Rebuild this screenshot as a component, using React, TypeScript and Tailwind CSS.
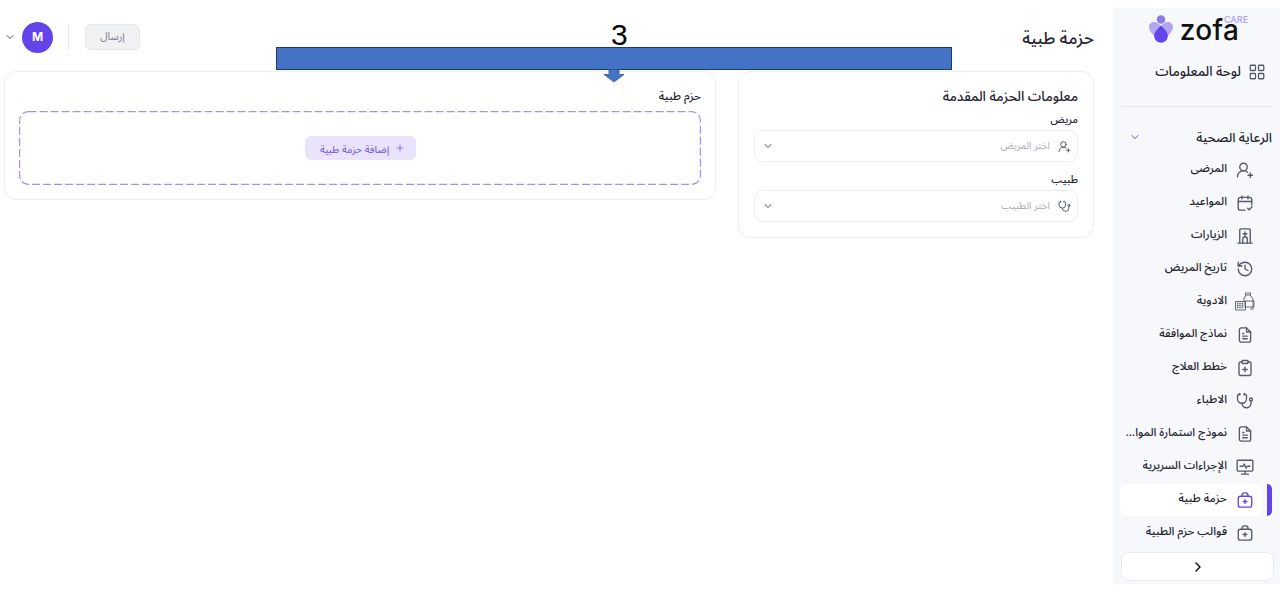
import {
  ChevronDown,
  ChevronRight,
  ClipboardPlus,
  History,
  LayoutGrid,
  Plus,
  Stethoscope,
  UserRoundPlus,
} from "lucide-react";

type IconProps = { className?: string; strokeWidth?: number };

function CalendarTick({ className, strokeWidth = 1.7 }: IconProps) {
  return (
    <svg viewBox="0 0 24 24" fill="none" stroke="currentColor" strokeWidth={strokeWidth} strokeLinecap="round" strokeLinejoin="round" className={className}>
      <path d="M8 2.500v4M16 2.500v4M3 10h18" />
      <path d="M12 21.500H6a3 3 0 0 1-3-3V7.500a3 3 0 0 1 3-3h12a3 3 0 0 1 3 3v7" />
      <path d="m15.500 19 2 2 4-4" />
    </svg>
  );
}

function HospitalDoor({ className, strokeWidth = 1.7 }: IconProps) {
  return (
    <svg viewBox="0 0 24 24" fill="none" stroke="currentColor" strokeWidth={strokeWidth} strokeLinecap="round" strokeLinejoin="round" className={className}>
      <path d="M2.500 21.500h19M5 21.500V4a1.500 1.500 0 0 1 1.500-1.500h11A1.500 1.500 0 0 1 19 4v17.500" />
      <path d="M9 21.500V16a3 3 0 0 1 6 0v5.500M12 6.500v5M9.500 9h5" />
    </svg>
  );
}

function MedsIcon({ className }: IconProps) {
  return (
    <svg viewBox="0 0 20 20" fill="none" stroke="currentColor" strokeWidth="0.900" className={className}>
      <path d="M10.500 1h5v2h-5zM11 3 9 6.500V9M15 3l3 4v10h-3" />
      <path d="M10 9h9v6h-9z" />
      <path d="M.5 9.500h10V18H.5z" />
      <path d="M2 11.500h7M2 13.500h7M2 15.500h7" strokeWidth="1.300" strokeDasharray="1 .700" />
    </svg>
  );
}

function DocLines({ className, strokeWidth = 1.7 }: IconProps) {
  return (
    <svg viewBox="0 0 24 24" fill="none" stroke="currentColor" strokeWidth={strokeWidth} strokeLinecap="round" strokeLinejoin="round" className={className}>
      <path d="M14 2.500H7a2.500 2.500 0 0 0-2.500 2.500v14A2.500 2.500 0 0 0 7 21.500h10a2.500 2.500 0 0 0 2.500-2.500V8z" />
      <path d="M14 2.500V8h5.500M9 10h1.500M9 13.500h6M9 17h6" />
    </svg>
  );
}

function MonitorPulse({ className, strokeWidth = 1.7 }: IconProps) {
  return (
    <svg viewBox="0 0 24 24" fill="none" stroke="currentColor" strokeWidth={strokeWidth} strokeLinecap="round" strokeLinejoin="round" className={className}>
      <rect x="1.500" y="3" width="21" height="14.500" rx="1.500" />
      <path d="M12 17.500v4M7.500 21.500h9M5.500 11h4l1.500-3 2.500 5.500 1.500-2.500h3.500" />
    </svg>
  );
}

function MedicalCase({ className, strokeWidth = 1.8 }: IconProps) {
  return (
    <svg viewBox="0 0 24 24" fill="none" stroke="currentColor" strokeWidth={strokeWidth} strokeLinecap="round" strokeLinejoin="round" className={className}>
      <rect x="3" y="7" width="18" height="14.500" rx="3" />
      <path d="M8 7V5.500a3 3 0 0 1 3-3h2a3 3 0 0 1 3 3V7M12 11.500v5M9.500 14h5" />
    </svg>
  );
}

const navItems: { label: string; icon: (p: IconProps) => React.ReactNode; large?: boolean; active?: boolean }[] = [
  { label: "المرضى", icon: UserRoundPlus },
  { label: "المواعيد", icon: CalendarTick },
  { label: "الزيارات", icon: HospitalDoor },
  { label: "تاريخ المريض", icon: History },
  { label: "الادوية", icon: MedsIcon, large: true },
  { label: "نماذج الموافقة", icon: DocLines },
  { label: "خطط العلاج", icon: ClipboardPlus },
  { label: "الاطباء", icon: Stethoscope },
  { label: "نموذج استمارة المواد الطبية", icon: DocLines },
  { label: "الإجراءات السريرية", icon: MonitorPulse },
  { label: "حزمة طبية", icon: MedicalCase, active: true },
  { label: "قوالب حزم الطبية", icon: MedicalCase },
];

function Sidebar() {
  return (
    <aside className="mt-2 flex h-[576px] w-[167px] shrink-0 flex-col bg-[#f7f8fc]">
      <div className="flex h-[40px] items-center justify-center pt-[1px] pr-[6px]" dir="ltr">
        <svg viewBox="0 0 26 28" className="h-[28px] w-[26px]">
          <path d="M1 12c0-5.500 7-7.500 12-1 5-6.500 12-4.500 12 1 0 3.500-2.500 6.500-6 9.500H7C3.500 18.500 1 15.500 1 12z" fill="#b3a5f3" />
          <circle cx="13" cy="4.500" r="4.200" fill="#8b7be8" />
          <path d="M13 10.500c3.200 3.500 6.800 6.500 6.800 10.500a6.800 6.800 0 0 1-13.600 0c0-4 3.600-7 6.800-10.500z" fill="#6344e8" />
        </svg>
        <div className="relative mt-[2px] ml-[6px] font-['Inter',sans-serif] text-[28px] leading-[12px] font-medium tracking-[0.3px] text-[#111]">
          zofa
          <span className="absolute -top-[8px] -right-[9px] text-[9px] leading-[7px] font-semibold tracking-normal text-[#b6a8f5]">CARE</span>
        </div>
      </div>
      <div className="mt-[8px] flex h-[32px] items-center gap-[7px] pr-[14px]">
        <LayoutGrid className="h-[18px] w-[18px] text-[#535b69]" strokeWidth={1.7} />
        <span className="text-[13.400px] leading-[22px] font-medium text-[#1f2430]">لوحة المعلومات</span>
      </div>
      <div className="mx-[8px] mt-[18px] h-px bg-[#e5e7eb]" />
      <div className="mt-[14px] flex h-[32px] items-center justify-between pr-[8px] pl-[16px]">
        <span className="pt-[2px] text-[13px] leading-[22px] font-medium text-[#1f2430]">الرعاية الصحية</span>
        <ChevronDown className="h-3 w-3 text-[#6344e8]" />
      </div>
      <nav className="flex flex-col">
        {navItems.map((item) => (
          <div key={item.label} className="flex h-[33px] items-center gap-[5px] pr-[8px]">
            <div className={`h-[32px] w-[5px] shrink-0 rounded-r-md ${item.active ? "bg-[#6344e8]" : ""}`} />
            <div className={`flex h-[32px] w-[142px] items-center gap-[9px] rounded-lg pr-[8px] pl-[5px] ${item.active ? "bg-white" : ""}`}>
              <item.icon
                className={`shrink-0 ${item.large ? "-mx-[1px] h-[20px] w-[20px]" : "h-[18px] w-[18px]"} ${item.active ? "text-[#6344e8]" : "text-[#535b69]"}`}
                strokeWidth={1.8}
              />
              <span className="-mt-[3px] truncate text-[11.500px] leading-[24px] font-medium text-[#1f2430]">{item.label}</span>
            </div>
          </div>
        ))}
      </nav>
      <button className="mt-[3px] mr-[6px] flex h-[29px] w-[153px] items-center justify-center rounded-lg border border-[#e9eaef] bg-white text-[#111]">
        <ChevronRight className="h-4 w-4" strokeWidth={2.2} />
      </button>
    </aside>
  );
}

function SelectField({ label, placeholder, icon: Icon, className }: { label: string; placeholder: string; icon: (p: IconProps) => React.ReactNode; className?: string }) {
  return (
    <div className={className}>
      <div className="pt-[1px] text-[10.500px] leading-[15px] font-medium text-[#1f2430]">{label}</div>
      <div className="mt-[2px] flex h-[32px] items-center justify-between rounded-lg border border-[#eceef2] pr-[6px] pl-[7px]">
        <div className="flex items-center gap-[8px]">
          <Icon className="h-[13px] w-[13px] text-[#535b69]" strokeWidth={1.8} />
          <span className="-mt-[1px] text-[10px] leading-[16px] text-[#a9adb6]">{placeholder}</span>
        </div>
        <ChevronDown className="h-3 w-3 text-[#4b5563]" />
      </div>
    </div>
  );
}

export default function App() {
  return (
    <div dir="rtl" className="relative flex h-[595px] w-[1280px] overflow-hidden bg-white font-['Noto_Sans_Arabic','Inter',sans-serif] text-[#1f2430]">
      <Sidebar />
      <main className="min-w-0 flex-1 pr-[19px] pl-[4px]">
        <header className="flex h-[71px] items-center justify-between pt-[3px]">
          <h1 className="pt-[3px] text-[17px] leading-[26px] font-medium text-[#1f2430]">حزمة طبية</h1>
          <div className="flex items-center">
            <button className="h-[26px] w-[55px] rounded-md border border-[#e5e7eb] bg-[#f0f1f3] pt-[2px] text-[10.500px] text-[#7a7f89]">إرسال</button>
            <div className="mr-[16px] ml-[15px] h-[25px] w-px bg-[#e5e7eb]" />
            <div className="flex h-[31px] w-[31px] items-center justify-center rounded-full bg-[#6344e8] font-['Inter',sans-serif] text-[12px] font-bold text-white">M</div>
            <ChevronDown className="mr-[6px] h-3 w-3 text-[#4b5563]" />
          </div>
        </header>
        <div className="flex items-start gap-[22px]">
          <section className="h-[167px] w-[356px] shrink-0 rounded-xl border border-[#eceef2] px-[15px] pt-[15px]">
            <h2 className="text-[13.500px] leading-[20px] font-medium text-[#1f2430]">معلومات الحزمة المقدمة</h2>
            <SelectField className="mt-[5px]" label="مريض" placeholder="اختر المريض" icon={UserRoundPlus} />
            <SelectField className="mt-[10px]" label="طبيب" placeholder="اختر الطبيب" icon={Stethoscope} />
          </section>
          <section className="h-[129px] flex-1 rounded-xl border border-[#eceef2] px-[14px] pt-[15px]">
            <h2 className="text-[11.500px] leading-[18px] font-medium text-[#1f2430]">حزم طبية</h2>
            <div className="relative mt-[6px] flex h-[74px] items-center justify-center">
              <svg className="absolute inset-0 h-full w-full" fill="none">
                <rect x="0.600" y="0.600" width="680.800" height="72.800" rx="9" stroke="#a48ff5" strokeWidth="1.200" strokeDasharray="8 3" />
              </svg>
              <button className="flex h-[24px] w-[111px] items-center justify-center gap-[6px] rounded-md bg-[#e9e4fb] pl-[5px] text-[10px] font-medium text-[#7d63e8]">
                <Plus className="h-2.5 w-2.5" />
                <span className="pt-[2px]">إضافة حزمة طبية</span>
              </button>
            </div>
          </section>
        </div>
      </main>
      {/* annotation drawn on top of the screenshot */}
      <div className="absolute top-[47px] left-[276px] h-[23px] w-[676px] border border-[#1f3864] bg-[#4472c4]" />
      <svg className="absolute top-[69px] left-[603px]" width="22" height="14" viewBox="0 0 22 14">
        <path d="M6 0.500h10v5h5L11 13 1 5.500h5z" fill="#4472c4" stroke="#2f528f" strokeWidth="0.750" />
      </svg>
      <div className="absolute top-[17px] left-[611px] font-['Liberation_Sans',sans-serif] text-[30px] leading-[36px] text-black">3</div>
    </div>
  );
}
